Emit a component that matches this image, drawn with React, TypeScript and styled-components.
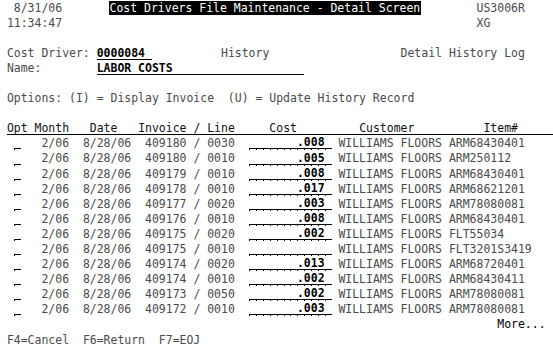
import React from "react";
import styled, { createGlobalStyle } from "styled-components";

const CW = 553 / 80; // cell width
const RH = 15.1; // row height

const Global = createGlobalStyle`
  html, body { margin: 0; padding: 0; background: #ffffff; }
  body { width: 553px; height: 358px; overflow: hidden; }
`;

const Screen = styled.div`
  width: 553px;
  height: 358px;
  overflow: hidden;
  background: #ffffff;
  display: grid;
  grid-template-rows: repeat(24, ${RH}px);
  padding-top: 0.5px;
  box-sizing: border-box;
  font-family: "DejaVu Sans Mono", "Liberation Mono", monospace;
  font-size: 11.48px;
  color: #4a4a4a;
`;

const Line = styled.div`
  display: grid;
  grid-template-columns: repeat(80, ${CW}px);
  align-items: center;
  white-space: pre;
  line-height: ${RH}px;
`;

const Text = styled.span<{ $col: number; $span?: number; $bold?: boolean; $dark?: boolean }>`
  grid-column: ${(p) => p.$col + 1} / span ${(p) => p.$span ?? 1};
  font-weight: ${(p) => (p.$bold ? 700 : 400)};
  color: ${(p) => (p.$dark ? "#000000" : "inherit")};
`;

const Title = styled.span<{ $col: number; $span: number }>`
  grid-column: ${(p) => p.$col + 1} / span ${(p) => p.$span};
  background: #000000;
  color: #ffffff;
  height: 14px;
  line-height: 14px;
  align-self: center;
  padding-left: 1px;
  margin-left: -2px;
`;

const Underlined = styled.span<{ $col: number; $span: number }>`
  grid-column: ${(p) => p.$col + 1} / span ${(p) => p.$span};
  font-weight: 700;
  color: #000000;
  height: 12px;
  line-height: 12px;
  align-self: center;
  border-bottom: 1.5px solid #000000;
`;

const HeaderRow = styled(Line)`
  color: #111111;
`;

const HeaderRule = styled.span`
  grid-column: 2 / span 79;
  grid-row: 1;
  align-self: end;
  height: 11px;
  border-bottom: 1px solid #000000;
  margin-bottom: 1px;
`;

const HeaderCell = styled.span<{ $col: number }>`
  grid-column: ${(p) => p.$col + 1} / span 10;
  grid-row: 1;
`;

const InputField = styled.span<{ $col: number; $span: number }>`
  grid-column: ${(p) => p.$col + 1} / span ${(p) => p.$span};
  position: relative;
  align-self: end;
  height: 11px;
  line-height: 11px;
  margin-bottom: 2px;
  border-bottom: 1px solid #000000;
  text-align: right;
  font-weight: 700;
  color: #000000;
  &::after {
    content: "";
    position: absolute;
    left: 0;
    right: 0;
    top: 100%;
    height: 2px;
    background: repeating-linear-gradient(
      to right,
      #000000 0 1px,
      transparent 1px ${CW}px
    );
  }
`;

type Row = { month: string; date: string; inv: string; line: string; cost: string; item: string };

const rows: Row[] = [
  { month: "2/06", date: "8/28/06", inv: "409180", line: "0030", cost: ".008", item: "ARM68430401" },
  { month: "2/06", date: "8/28/06", inv: "409180", line: "0010", cost: ".005", item: "ARM250112" },
  { month: "2/06", date: "8/28/06", inv: "409179", line: "0010", cost: ".008", item: "ARM68430401" },
  { month: "2/06", date: "8/28/06", inv: "409178", line: "0010", cost: ".017", item: "ARM68621201" },
  { month: "2/06", date: "8/28/06", inv: "409177", line: "0020", cost: ".003", item: "ARM78080081" },
  { month: "2/06", date: "8/28/06", inv: "409176", line: "0010", cost: ".008", item: "ARM68430401" },
  { month: "2/06", date: "8/28/06", inv: "409175", line: "0020", cost: ".002", item: "FLT55034" },
  { month: "2/06", date: "8/28/06", inv: "409175", line: "0010", cost: "", item: "FLT3201S3419" },
  { month: "2/06", date: "8/28/06", inv: "409174", line: "0020", cost: ".013", item: "ARM68720401" },
  { month: "2/06", date: "8/28/06", inv: "409174", line: "0010", cost: ".002", item: "ARM68430411" },
  { month: "2/06", date: "8/28/06", inv: "409173", line: "0050", cost: ".002", item: "ARM78080081" },
  { month: "2/06", date: "8/28/06", inv: "409172", line: "0010", cost: ".003", item: "ARM78080081" },
];

const Blank = styled.div``;

export default function App() {
  return (
    <>
      <Global />
      <Screen>
        <Line>
          <Text $col={2} $span={7}>8/31/06</Text>
          <Title $col={16} $span={45}>Cost Drivers File Maintenance - Detail Screen</Title>
          <Text $col={69} $span={8}>US3006R</Text>
        </Line>
        <Line>
          <Text $col={1} $span={8}>11:34:47</Text>
          <Text $col={69} $span={3}>XG</Text>
        </Line>
        <Blank />
        <Line>
          <Text $col={1} $span={12}>Cost Driver:</Text>
          <Underlined $col={14} $span={8}>0000084</Underlined>
          <Text $col={32} $span={8}>History</Text>
          <Text $col={58} $span={18}>Detail History Log</Text>
        </Line>
        <Line>
          <Text $col={1} $span={5}>Name:</Text>
          <Underlined $col={14} $span={30}>LABOR COSTS</Underlined>
        </Line>
        <Blank />
        <Line>
          <Text $col={1} $span={60}>Options: (I) = Display Invoice  (U) = Update History Record</Text>
        </Line>
        <Blank />
        <HeaderRow>
          <HeaderRule />
          <HeaderCell $col={1}>Opt</HeaderCell>
          <HeaderCell $col={5}>Month</HeaderCell>
          <HeaderCell $col={13}>Date</HeaderCell>
          <HeaderCell $col={20}>Invoice</HeaderCell>
          <HeaderCell $col={28}>/</HeaderCell>
          <HeaderCell $col={30}>Line</HeaderCell>
          <HeaderCell $col={39}>Cost</HeaderCell>
          <HeaderCell $col={52}>Customer</HeaderCell>
          <HeaderCell $col={70}>Item#</HeaderCell>
        </HeaderRow>
        {rows.map((r, i) => (
          <Line key={i}>
            <InputField $col={2} $span={1} />
            <Text $col={6} $span={4}>{r.month}</Text>
            <Text $col={12} $span={7}>{r.date}</Text>
            <Text $col={21} $span={6}>{r.inv}</Text>
            <Text $col={28} $span={1}>/</Text>
            <Text $col={30} $span={4}>{r.line}</Text>
            <InputField $col={36} $span={12}>{r.cost ? r.cost + " " : ""}</InputField>
            <Text $col={49} $span={15}>WILLIAMS FLOORS</Text>
            <Text $col={65} $span={14}>{r.item}</Text>
          </Line>
        ))}
        <Line>
          <Text $col={72} $span={7} $dark>More...</Text>
        </Line>
        <Line>
          <Text $col={1} $span={9}>F4=Cancel</Text>
          <Text $col={12} $span={9}>F6=Return</Text>
          <Text $col={23} $span={6}>F7=EOJ</Text>
        </Line>
      </Screen>
    </>
  );
}
